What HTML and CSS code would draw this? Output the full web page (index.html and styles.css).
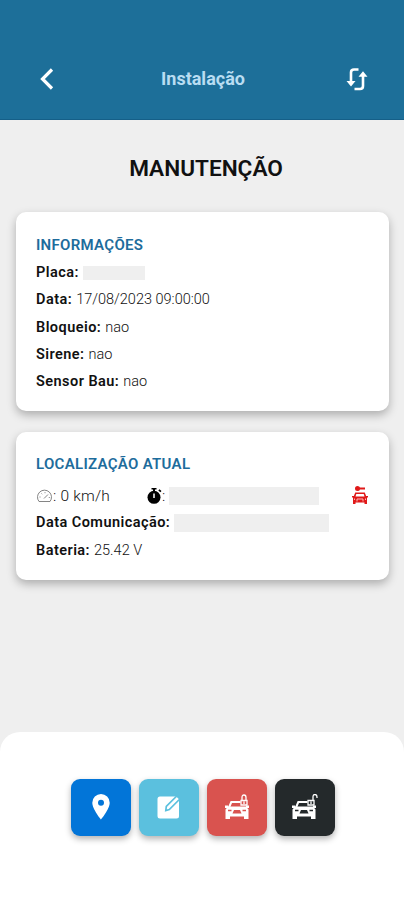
FILE: index.html
```html
<!DOCTYPE html>
<html lang="pt-BR">
<head>
    <meta charset="UTF-8">
    <meta name="viewport" content="width=device-width, initial-scale=1.0">
    <title>Instalação</title>
    <link rel="stylesheet" href="styles.css">
</head>
<body>

<header class="top-bar">
    <svg class="back-icon" viewBox="0 0 14 22"><path d="M12 1.500 2.500 11l9.500 9.500"/></svg>
    <span class="top-title">Instalação</span>
    <svg class="refresh-icon" viewBox="0 0 22 24">
        <path class="line" d="M12.500 2.500H8Q5 2.500 5 5.500V15M8.500 22H14q3 0 3-3V9"/>
        <path class="arrow" d="M.5 14h9L5 19.500zM12.500 9.800h9L17 4.300z"/>
    </svg>
</header>

<main class="content">
    <h1>MANUTENÇÃO</h1>

    <section class="card info-card">
        <h2>INFORMAÇÕES</h2>
        <p><b>Placa:</b> <span class="hidden-value plate"></span></p>
        <p><b>Data:</b> 17/08/2023 09:00:00</p>
        <p><b>Bloqueio:</b> nao</p>
        <p><b>Sirene:</b> nao</p>
        <p><b>Sensor Bau:</b> nao</p>
    </section>

    <section class="card location-card">
        <h2>LOCALIZAÇÃO ATUAL</h2>
        <div class="status-row">
            <div class="speed">
                <svg class="gauge-icon" viewBox="0 0 17 14"><path d="M3 12.500a7 7 0 1 1 11 0zM8 9.500l4-4M3.500 8h1M5.500 4.500l.7.700M9 3.200v1M12.800 8.500h1"/></svg><span>: 0 km/h</span>
            </div>
            <div class="timer">
                <svg class="timer-icon" viewBox="0 0 15 16">
                    <circle cx="7" cy="9.300" r="6.500"/>
                    <path d="M4.500 0h5v1.500H8V4H6V1.500H4.500zM11.300 2.500l1.200-1.200L14.500 3l-1.200 1.300z"/>
                    <path class="hand" d="M7 5.500v4.500"/>
                </svg><span>:</span>
                <span class="hidden-value address"></span>
            </div>
            <svg class="car-alert-icon" viewBox="0 0 16 20">
                <path d="M3 3.500Q3 1 5.500 1 7.500 1 8 2.500H13v2H8Q7.500 6 5.500 6 3 6 3 3.500z"/>
                <path d="M3.200 7.500h9.600l1.300 3.500H16v1.500h-1V19h-2.500v-1.500h-9V19H1v-6.500H0V11h1.900zM4.300 9l-.8 2.500h9L11.700 9z" fill-rule="evenodd"/>
                <path class="lights" d="M2.500 13.500v1.500M13.500 13.500v1.500M5 16.500v-2.500h6v2.500"/>
            </svg>
        </div>
        <p><b>Data Comunicação:</b> <span class="hidden-value date"></span></p>
        <p><b>Bateria:</b> 25.42 V</p>
    </section>
</main>

<nav class="bottom-sheet">
    <button class="action location" aria-label="Localização">
        <svg width="18" height="26" viewBox="0 0 18 26"><path d="M9 0a8.700 8.700 0 0 0-8.700 8.700C.3 15 9 25.500 9 25.500S17.700 15 17.700 8.700A8.700 8.700 0 0 0 9 0zm0 5.800a3 3 0 1 1 0 6 3 3 0 0 1 0-6z" fill-rule="evenodd"/></svg>
    </button>
    <button class="action edit" aria-label="Editar">
        <svg width="24" height="24" viewBox="0 0 24 24">
            <path d="M3 1.500h17l2 2V21q0 2.500-2.500 2.500H3Q.5 23.500.5 21V4Q.5 1.500 3 1.500z"/>
            <path class="pencil" d="m8.800 15.500.5-4L19.800 1l3 3-10.500 10.500z"/>
        </svg>
    </button>
    <button class="action block" aria-label="Bloquear">
        <svg width="24" height="26" viewBox="0 0 24 26">
            <path class="roof" d="M4 13.500 6.300 8h9.200"/>
            <path d="M3 12.500h18l2.500 3V25H19v-2.500H5V25H.500v-9.500zM0 11.500h3V14H0zM21 11.500h3V14h-3z"/>
            <path class="detail" d="M3 16.500h3.500M17.500 16.500H21"/>
            <path class="grille" d="M9 16h6l1.500 3.500h-9z"/>
            <path class="lock" d="M17 6.500V3.500q0-2.500 2-2.500t2 2.500v3M16 6.500h6V11h-6zM19 7.500v2.500"/>
        </svg>
    </button>
    <button class="action unblock" aria-label="Desbloquear">
        <svg width="26" height="26" viewBox="0 0 26 26">
            <path class="roof" d="M4 13.500 6.300 8h9.200"/>
            <path d="M3 12.500h18l2.500 3V25H19v-2.500H5V25H.500v-9.500zM0 11.500h3V14H0zM21 11.500h3V14h-3z"/>
            <path class="detail" d="M3 16.500h3.500M17.500 16.500H21"/>
            <path class="grille" d="M9 16h6l1.500 3.500h-9z"/>
            <path class="lock" d="M21 6.500V3q0-2.500 2-2.500T25 3v1M16 6.500h6V11h-6zM19 7.500v2.500"/>
        </svg>
    </button>
</nav>

</body>
</html>
```

FILE: styles.css
```css
* {
    box-sizing: border-box;
}

body {
    margin: 0;
    height: 900px;
    display: flex;
    flex-direction: column;
    background-color: #efefef;
    font-family: Roboto, sans-serif;
    color: #111;
}

.top-bar {
    height: 120px;
    padding: 38px 36px 0 40px;
    display: flex;
    align-items: center;
    justify-content: space-between;
    background-color: #1d6f99;
    border-bottom: 1px solid #155f88;
}

.back-icon {
    width: 14px;
    height: 22px;
    fill: none;
    stroke: white;
    stroke-width: 3.2;
}

.top-title {
    margin-left: 6px;
    font-size: 18px;
    font-weight: bold;
    color: #b9ddf2;
}

.refresh-icon {
    width: 22px;
    height: 24px;
}

.refresh-icon .line {
    fill: none;
    stroke: white;
    stroke-width: 2.6;
}

.refresh-icon .arrow {
    fill: white;
}

.content {
    flex: 1;
    padding: 0 15px 0 16px;
}

h1 {
    margin: 34px 0 29px 7px;
    font-size: 22.6px;
    line-height: 29px;
    font-weight: 600;
    text-align: center;
}

.card {
    padding: 20px;
    margin-bottom: 21px;
    background-color: white;
    border-radius: 10px;
    box-shadow: 0 4px 10px rgba(0, 0, 0, 0.28);
}

.info-card {
    height: 199px;
}

.location-card {
    height: 148px;
    padding-top: 19px;
}

h2 {
    margin: 0 0 1px;
    font-size: 15px;
    line-height: 26px;
    font-weight: 600;
    letter-spacing: 0.3px;
    color: #1d6c9c;
}

p {
    margin: 0;
    font-size: 14.5px;
    line-height: 27.3px;
    font-weight: 300;
    white-space: nowrap;
}

b {
    margin-right: 0.5px;
    font-weight: 600;
    letter-spacing: 0.45px;
}

.hidden-value {
    display: inline-block;
    background-color: #efefef;
}

.plate {
    width: 62px;
    height: 14px;
    vertical-align: -3px;
}

.address {
    width: 150px;
    height: 18px;
    margin-left: 4px;
}

.date {
    width: 155px;
    height: 18px;
    vertical-align: -5px;
}

.status-row {
    height: 27.3px;
    margin-top: 5px;
    display: flex;
    align-items: center;
    font-size: 15.5px;
    font-weight: 300;
}

.speed, .timer {
    display: flex;
    align-items: center;
}

.speed {
    width: 111px;
    letter-spacing: 0.2px;
}

.gauge-icon {
    width: 17px;
    height: 14px;
    fill: none;
    stroke: #777;
    stroke-width: 0.9;
}

.timer-icon {
    width: 15px;
    height: 16px;
}

.timer-icon .hand {
    stroke: white;
    stroke-width: 1.5;
}

.car-alert-icon {
    width: 16px;
    height: 20px;
    margin: 0 1px 2px auto;
    fill: #e01919;
}

.car-alert-icon .lights {
    fill: none;
    stroke: #ffb5b5;
    stroke-width: 1;
}

.bottom-sheet {
    height: 168px;
    padding: 47px 0 0 2px;
    display: flex;
    justify-content: center;
    gap: 8px;
    background-color: white;
    border-radius: 20px 20px 0 0;
}

.action {
    width: 60px;
    height: 57px;
    padding: 0 0 2px;
    display: flex;
    align-items: center;
    justify-content: center;
    border: none;
    border-radius: 9px;
    box-shadow: 0 3px 6px rgba(0, 0, 0, 0.3);
    fill: white;
}

.action svg {
    display: block;
}

.location {
    background-color: #0275d8;
}

.edit {
    background-color: #5bc0de;
}

.block {
    background-color: #d9534f;
    color: #d9534f;
}

.unblock {
    background-color: #24292b;
    color: #24292b;
}

.pencil {
    fill: white;
    stroke: #5bc0de;
    stroke-width: 1.7;
}

.roof {
    fill: none;
    stroke: white;
    stroke-width: 2;
}

.detail {
    stroke: currentColor;
    stroke-width: 1.5;
}

.grille {
    fill: currentColor;
}

.lock {
    fill: none;
    stroke: white;
    stroke-width: 1.3;
}
```
